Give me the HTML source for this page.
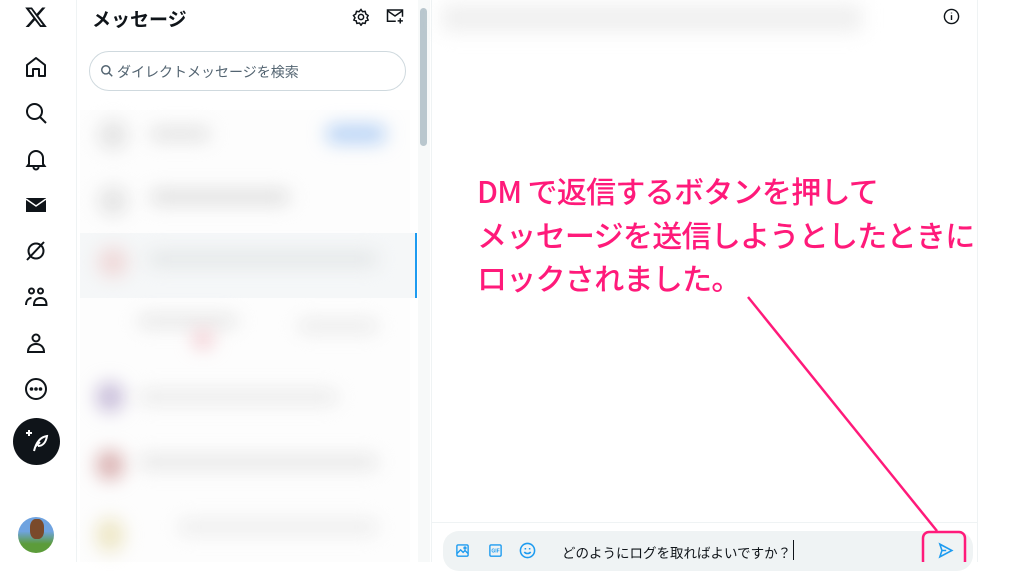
<!DOCTYPE html>
<html><head><meta charset="utf-8"><style>
*{margin:0;padding:0;box-sizing:border-box}
body{width:1024px;height:562px;overflow:hidden;background:#fff;font-family:"Liberation Sans","Noto Sans CJK JP",sans-serif;position:relative}
.nav{position:absolute;left:0;top:0;width:77px;height:562px;border-right:1px solid #eff3f4}
.nav svg{position:absolute;left:24px;width:24px;height:24px}
.list{position:absolute;left:78px;top:0;width:340px;height:562px}
.sb{position:absolute;left:418px;top:0;width:12px;height:562px;background:#f7f9f9}
.sb div{position:absolute;left:2px;top:8px;width:7px;height:138px;border-radius:4px;background:#b9c7ce}
.b{position:absolute;filter:blur(9px);border-radius:8px}
.chat{position:absolute;left:431px;top:0;width:547px;height:562px;border-left:1px solid #eff3f4;border-right:1px solid #eff3f4}
.pink{position:absolute;left:477px;color:#ff1a7a;font-size:30px;line-height:30px;white-space:nowrap;font-family:"Noto Sans CJK JP",sans-serif;letter-spacing:-0.7px;font-weight:500}
</style></head><body>
<div class="nav">
<svg style="top:5px" viewBox="0 0 24 24"><path d="M18.2 2.5h3.3l-7.2 8.3 8.5 11.2h-6.7l-5.2-6.8-6 6.8H1.6l7.7-8.8L1.2 2.5h6.8l4.7 6.2zm-1.2 17.6h1.8L7.1 4.3H5.1z" fill="#0f1419"/></svg>
<svg style="top:55px" viewBox="0 0 24 24" fill="none" stroke="#0f1419" stroke-width="2"><path d="M3 10l9-7 9 7v11h-6v-7H9v7H3z" stroke-linejoin="round"/></svg>
<svg style="top:101px" viewBox="0 0 24 24" fill="none" stroke="#0f1419" stroke-width="2"><circle cx="10.5" cy="10.5" r="7.5"/><path d="M16 16l6 6"/></svg>
<svg style="top:147px" viewBox="0 0 24 24" fill="none" stroke="#0f1419" stroke-width="2"><path d="M5 17V11a7 7 0 0114 0v6l1.5 2h-17zM9.5 20a2.5 2.5 0 005 0"/></svg>
<svg style="top:193px" viewBox="0 0 24 24"><path d="M2 5h20v14H2z" fill="#0f1419"/><path d="M2 6l10 7 10-7" fill="none" stroke="#fff" stroke-width="1.5"/></svg>
<svg style="top:239px" viewBox="0 0 24 24" fill="none" stroke="#0f1419" stroke-width="2"><circle cx="12" cy="12" r="7.5"/><path d="M20 3L3 21"/></svg>
<svg style="top:285px" viewBox="0 0 24 24" fill="none" stroke="#0f1419" stroke-width="2"><circle cx="7.5" cy="6" r="2.5"/><circle cx="16.5" cy="6" r="2.5"/><path d="M2 20c0-5 3-7 5.5-7M10 20c0-5 3-7 6.5-7s6 2 6 7z"/></svg>
<svg style="top:331px" viewBox="0 0 24 24" fill="none" stroke="#0f1419" stroke-width="2"><circle cx="12" cy="7" r="3.5"/><path d="M4 21c0-5 3.5-8 8-8s8 3 8 8z"/></svg>
<svg style="top:377px" viewBox="0 0 24 24" fill="none" stroke="#0f1419" stroke-width="2"><circle cx="12" cy="12" r="10"/><circle cx="7.5" cy="12" r=".8" fill="#0f1419"/><circle cx="12" cy="12" r=".8" fill="#0f1419"/><circle cx="16.5" cy="12" r=".8" fill="#0f1419"/></svg>
<div style="position:absolute;left:13px;top:418px;width:47px;height:47px;border-radius:50%;background:#0f1419"></div>
<svg style="top:429px;left:25px" viewBox="0 0 24 24" fill="none" stroke="#fff" stroke-width="2"><path d="M1 4h6M4 1v6"/><path d="M9 22c2-8 6-14 13-15-1 6-4 10-9 10M11 17l4-4"/></svg>
<div style="position:absolute;left:18px;top:517px;width:36px;height:36px;border-radius:50%;background:linear-gradient(#6fa3e0 40%,#5c9c3a 75%)"></div>
<div style="position:absolute;left:30px;top:519px;width:14px;height:20px;border-radius:40%;background:#7a4a2b"></div>
</div>
<div class="list">
<div style="position:absolute;left:14px;top:5px;font-size:19px;font-weight:bold;color:#0f1419">メッセージ</div>
<svg style="position:absolute;left:274px;top:8px" width="18" height="18" viewBox="0 0 24 24" fill="none" stroke="#0f1419" stroke-width="2"><circle cx="12" cy="12" r="3.5"/><path d="M12 2l2 3 3.5-.5 1 3.5 3 2-1.5 3 1.5 3-3 1-1 3.5-3.5-.5-2 3-2-3-3.5.5-1-3.5-3-1 1.5-3L2 10l3-2 1-3.5 3.5.5z"/></svg>
<svg style="position:absolute;left:308px;top:7px" width="18" height="18" viewBox="0 0 24 24" fill="none" stroke="#0f1419" stroke-width="2"><path d="M13 19H2V4h20v9M2 5l10 7 10-7M19 15v7M15.5 18.5h7"/></svg>
<div style="position:absolute;left:11px;top:51px;width:317px;height:40px;border:1px solid #cfd9de;border-radius:20px"></div>
<svg style="position:absolute;left:22px;top:64px" width="14" height="14" viewBox="0 0 24 24" fill="none" stroke="#536471" stroke-width="2.5"><circle cx="10" cy="10" r="7"/><path d="M15 15l6 6"/></svg>
<div style="position:absolute;left:39px;top:62px;font-size:14px;color:#536471">ダイレクトメッセージを検索</div>
<div style="position:absolute;left:2px;top:110px;width:330px;height:452px;background:#fdfdfd"></div>
<div style="position:absolute;left:2px;top:233px;width:336px;height:65px;background:#f5f7f8"></div>
<div style="position:absolute;left:337px;top:233px;width:2px;height:65px;background:#1d9bf0"></div>
<div class="b" style="left:20px;top:120px;width:30px;height:30px;background:#e4e4e4;border-radius:50%"></div>
<div class="b" style="left:72px;top:128px;width:60px;height:12px;background:#ddd"></div>
<div class="b" style="left:248px;top:125px;width:60px;height:18px;background:#b5d1f5"></div>
<div class="b" style="left:20px;top:186px;width:30px;height:30px;background:#e4e4e4;border-radius:50%"></div>
<div class="b" style="left:72px;top:190px;width:140px;height:14px;background:#ddd"></div>
<div class="b" style="left:20px;top:247px;width:30px;height:30px;background:#efd8d8;border-radius:50%"></div>
<div class="b" style="left:70px;top:252px;width:230px;height:14px;background:#e2e5e6"></div>
<div class="b" style="left:60px;top:315px;width:100px;height:12px;background:#e4e4e4"></div>
<div class="b" style="left:115px;top:330px;width:20px;height:18px;background:#f3c9cf"></div>
<div class="b" style="left:220px;top:320px;width:80px;height:12px;background:#e8e8e8"></div>
<div class="b" style="left:18px;top:382px;width:28px;height:30px;background:#c7bcd9;border-radius:50%"></div>
<div class="b" style="left:60px;top:390px;width:200px;height:14px;background:#eaeaea"></div>
<div class="b" style="left:18px;top:450px;width:28px;height:30px;background:#d9b0b0;border-radius:50%"></div>
<div class="b" style="left:60px;top:455px;width:240px;height:14px;background:#e6e6e6"></div>
<div class="b" style="left:18px;top:518px;width:28px;height:34px;background:#ede6c4;border-radius:50%"></div>
<div class="b" style="left:100px;top:520px;width:200px;height:14px;background:#ececec"></div>
</div>
<div class="sb"><div></div></div>
<div class="chat">
<div class="b" style="left:10px;top:4px;width:420px;height:28px;background:#f0f0f0;border-radius:4px"></div>
<svg style="position:absolute;left:511px;top:8px" width="17" height="17" viewBox="0 0 24 24" fill="none" stroke="#0f1419" stroke-width="2"><circle cx="12" cy="12" r="10"/><path d="M12 10v7M12 6.5v1"/></svg>
<div style="position:absolute;left:0;top:522px;width:545px;height:1px;background:#eff3f4"></div>
<div style="position:absolute;left:11px;top:531px;width:530px;height:40px;border-radius:16px;background:#eff3f4"></div>
<svg style="position:absolute;left:23px;top:543px" width="15" height="15" viewBox="0 0 24 24" fill="none" stroke="#1d9bf0" stroke-width="2.2"><rect x="3" y="3" width="18" height="18" rx="2"/><path d="M3 17l6-6 4 4 3-3 5 5"/><circle cx="16" cy="8" r="1.5"/></svg>
<svg style="position:absolute;left:56px;top:543px" width="15" height="15" viewBox="0 0 24 24"><rect x="3" y="3" width="18" height="18" rx="2" fill="none" stroke="#1d9bf0" stroke-width="2.2"/><text x="12" y="15.5" font-size="8" fill="#1d9bf0" text-anchor="middle" font-family="Liberation Sans" font-weight="bold">GIF</text></svg>
<svg style="position:absolute;left:87px;top:542px" width="17" height="17" viewBox="0 0 24 24" fill="none" stroke="#1d9bf0" stroke-width="2.2"><circle cx="12" cy="12" r="10"/><path d="M7.5 14c2 3 7 3 9 0"/><path d="M9 8.5v2M15 8.5v2"/></svg>
<div style="position:absolute;left:130px;top:542px;font-size:13.5px;color:#0f1419;white-space:nowrap">どのようにログを取ればよいですか？</div>
<div style="position:absolute;left:361px;top:540px;width:1px;height:20px;background:#0f1419"></div>
<svg style="position:absolute;left:505px;top:542px" width="17" height="17" viewBox="0 0 24 24" fill="none" stroke="#1d9bf0" stroke-width="2.2"><path d="M4 3l17 9-17 9 3-9z M7 12h6"/></svg>
</div>
<div class="pink" style="top:175px">DM で返信するボタンを押して</div>
<div class="pink" style="top:219px">メッセージを送信しようとしたときに</div>
<div class="pink" style="top:262px">ロックされました。</div>
<svg style="position:absolute;left:0;top:0" width="1024" height="562"><line x1="748" y1="297" x2="937" y2="531" stroke="#ff1a7a" stroke-width="2.5"/><rect x="923" y="532" width="42" height="35" rx="6" fill="none" stroke="#ff1a7a" stroke-width="2.5"/></svg>
</body></html>
